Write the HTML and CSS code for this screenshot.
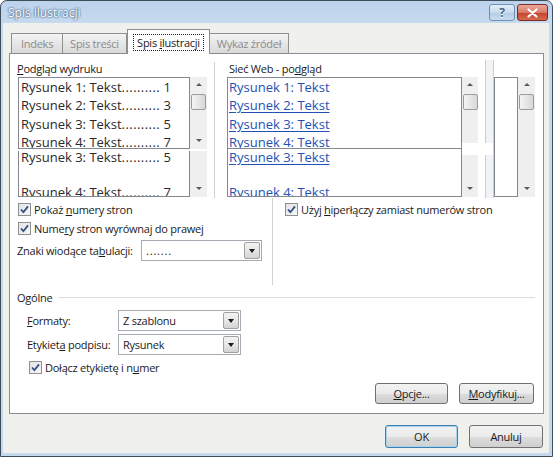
FILE: index.html
```html
<!DOCTYPE html>
<html lang="pl">
<head>
<meta charset="utf-8">
<title>Spis ilustracji</title>
<link rel="stylesheet" href="styles.css">
</head>
<body>
<div class="window">
  <div class="titlebar">
    <span class="title">Spis ilustracji</span>
    <div class="caps">
      <span class="cap help">?</span>
      <span class="cap close"><svg width="13" height="10" viewBox="0 0 13 10"><path d="M2.5 1.5 L10.5 8.5 M10.5 1.5 L2.5 8.5" stroke="#fff" stroke-width="2.2" stroke-linecap="round"/></svg></span>
    </div>
  </div>
  <div class="client">
    <div class="tabs">
      <span class="tab t1">Indeks</span>
      <span class="tab t2">Spis treści</span>
      <span class="tab t3"><span class="focus">Spis <u>i</u>lustracji</span></span>
      <span class="tab t4">Wykaz źródeł</span>
    </div>
    <div class="panel">
      <div class="top">
        <div class="pcol">
          <div class="lbl"><u>P</u>odgląd wydruku</div>
          <div class="pv pv1">
            <div class="lb lb1">
              <div class="row">Rysunek 1: Tekst<span class="dots">..........</span> 1</div>
              <div class="row">Rysunek 2: Tekst<span class="dots">..........</span> 3</div>
              <div class="row">Rysunek 3: Tekst<span class="dots">..........</span> 5</div>
              <div class="row">Rysunek 4: Tekst<span class="dots">..........</span> 7</div>
            </div>
            <div class="sb"><i class="up"></i><i class="thumb"></i><i class="dn"></i></div>
          </div>
          <div class="pv pv2">
            <div class="lb lb2">
              <div class="row r-first">Rysunek 3: Tekst<span class="dots">..........</span> 5</div>
              <div class="row r-second">Rysunek 4: Tekst<span class="dots">..........</span> 7</div>
            </div>
            <div class="sb"><i class="dn"></i></div>
          </div>
        </div>
        <div class="vsep"></div>
        <div class="wcol">
          <div class="lbl wlbl">Sieć Web - po<u>d</u>gląd</div>
          <div class="wv">
            <div class="wboxes">
              <div class="wlb wlb1">
                <div class="wrow nu">Rysunek 1: Tekst</div>
                <div class="wrow">Rysunek 2: Tekst</div>
                <div class="wrow">Rysunek 3: Tekst</div>
                <div class="wrow">Rysunek 4: Tekst</div>
              </div>
              <div class="wlb wlb2">
                <div class="wrow r-first-w">Rysunek 3: Tekst</div>
                <div class="wrow r-second">Rysunek 4: Tekst</div>
              </div>
            </div>
            <div class="wsb">
              <div class="sb sbA"><i class="up"></i><i class="thumb"></i></div>
              <div class="sbgap"></div>
              <div class="sb sbB"><i class="dn"></i></div>
            </div>
          </div>
        </div>
        <div class="strip">
          <div class="st-part st-top"></div>
          <div class="st-gap"></div>
          <div class="st-part st-bot"></div>
        </div>
        <div class="rp">
          <div class="rbox"></div>
          <div class="sb sb3"><i class="up"></i><i class="thumb"></i><i class="dn"></i></div>
        </div>
      </div>

      <div class="mid">
        <div class="mcol">
          <div class="cbrow">
            <span class="cb"><svg width="11" height="11" viewBox="0 0 11 11"><path d="M2 5.5 L4.4 8.2 L9 2.4" fill="none" stroke="#2f4f87" stroke-width="1.8"/></svg></span>
            <span>Pokaż <u>n</u>umery stron</span>
          </div>
          <div class="cbrow cbrow2">
            <span class="cb"><svg width="11" height="11" viewBox="0 0 11 11"><path d="M2 5.5 L4.4 8.2 L9 2.4" fill="none" stroke="#2f4f87" stroke-width="1.8"/></svg></span>
            <span>Nume<u>r</u>y stron wyrównaj do prawej</span>
          </div>
          <div class="comborow">
            <span>Znaki wiodące ta<u>b</u>ulacji:</span>
            <span class="combo c-tab"><span class="cval cdots">.......</span><span class="cbtn"><i class="tri"></i></span></span>
          </div>
        </div>
        <div class="msep"></div>
        <div class="mright">
          <div class="cbrow">
            <span class="cb"><svg width="11" height="11" viewBox="0 0 11 11"><path d="M2 5.5 L4.4 8.2 L9 2.4" fill="none" stroke="#2f4f87" stroke-width="1.8"/></svg></span>
            <span>Użyj <u>h</u>iperłączy zamiast numerów stron</span>
          </div>
        </div>
      </div>

      <div class="grp"><span>Ogólne</span><span class="gline"></span></div>

      <div class="frow">
        <span class="flbl"><u>F</u>ormaty:</span>
        <span class="combo c-f"><span class="cval">Z szablonu</span><span class="cbtn"><i class="tri"></i></span></span>
      </div>
      <div class="frow frow2">
        <span class="flbl">Etykiet<u>a</u> podpisu:</span>
        <span class="combo c-f"><span class="cval">Rysunek</span><span class="cbtn"><i class="tri"></i></span></span>
      </div>
      <div class="cbrow cbrow3">
        <span class="cb"><svg width="11" height="11" viewBox="0 0 11 11"><path d="M2 5.5 L4.4 8.2 L9 2.4" fill="none" stroke="#2f4f87" stroke-width="1.8"/></svg></span>
        <span>Dołącz etykietę i n<u>u</u>mer</span>
      </div>
      <div class="pbtns">
        <span class="btn b-opc"><u>O</u>pcje...</span>
        <span class="btn b-mod"><u>M</u>odyfikuj...</span>
      </div>
    </div>
    <div class="footer">
      <span class="btn b-ok">OK</span>
      <span class="btn b-cancel">Anuluj</span>
    </div>
  </div>
</div>
</body>
</html>
```

FILE: styles.css
```css
html, body {
  margin: 0;
  padding: 0;
  background: #ffffff;
}
body {
  font-family: "Open Sans", "Noto Sans", "DejaVu Sans", sans-serif;
  font-size: 11px;
  letter-spacing: -0.25px;
  color: #1a1a1a;
}
u { text-decoration: underline; text-underline-offset: 1px; }

.window {
  width: 553px;
  height: 457px;
  box-sizing: border-box;
  border: 1px solid #3f4c5a;
  border-radius: 7px 7px 0 0;
  background: linear-gradient(#bcd3ec, #c6daef 22px, #c4d8ee);
  padding: 0 3px 3px 2px;
  display: flex;
  flex-direction: column;
  overflow: hidden;
}

.titlebar {
  height: 22px;
  display: flex;
  align-items: flex-start;
  justify-content: space-between;
  padding-left: 5px;
}
.title {
  margin-top: 4px;
  font-size: 12px;
  line-height: 16px;
  letter-spacing: 0;
  color: #ffffff;
  text-shadow: 0 0 2px #4f6f92, 0 0 2px #4f6f92, 0 0 1px #4f6f92;
}
.caps {
  display: flex;
  gap: 2px;
  margin-top: 3px;
  margin-right: 1px;
}
.cap {
  height: 17px;
  box-sizing: border-box;
  border-radius: 3px;
  display: flex;
  align-items: center;
  justify-content: center;
}
.help {
  width: 26px;
  border: 1px solid #6f8fb3;
  background: linear-gradient(#e3eef9, #c7dbef 50%, #b3cce6 51%, #c8dcef);
  color: #4a6485;
  font-size: 12px;
  font-weight: bold;
  text-shadow: 0 1px 0 #fff;
}
.close {
  width: 31px;
  border: 1px solid #7e2a20;
  background: linear-gradient(#e9a89c, #d87a68 50%, #c2432e 51%, #d7694f);
}

.client {
  flex: 1;
  background: #f0f0ed;
  padding: 0 5px 0 6px;
  display: flex;
  flex-direction: column;
}

.tabs {
  display: flex;
  align-items: flex-end;
  height: 24px;
  margin-top: 6px;
  padding-left: 2px;
}
.tab {
  height: 20px;
  box-sizing: border-box;
  border: 1px solid #8e8f8f;
  border-bottom: none;
  background: linear-gradient(#f4f4f4, #e6e6e6 50%, #dadada);
  color: #8c8c8c;
  display: flex;
  align-items: center;
  justify-content: center;
  margin-left: -1px;
}
.t1 { width: 52px; margin-left: 0; }
.t2 { width: 65px; }
.t3 {
  width: 83px;
  height: 25px;
  margin-left: 0;
  margin-bottom: -1px;
  background: #ffffff;
  color: #1a1a1a;
  position: relative;
  z-index: 1;
}
.t4 { width: 80px; }
.focus {
  border: 1px dotted #222;
  padding: 0 3px;
  line-height: 15px;
}

.panel {
  height: 361px;
  box-sizing: border-box;
  border: 1px solid #898c95;
  background: #ffffff;
  padding: 6px 6px 0 7px;
  display: flex;
  flex-direction: column;
}

.top {
  display: flex;
  height: 138px;
}
.pcol {
  width: 190px;
  display: flex;
  flex-direction: column;
}
.lbl {
  height: 17px;
  line-height: 17px;
}
.pv { display: flex; }
.pv1 { height: 72px; }
.pv2 { height: 46px; margin-top: 2px; }
.lb {
  width: 172px;
  margin-left: 1px;
  box-sizing: border-box;
  border: 1px solid #828790;
  overflow: hidden;
  padding-left: 2px;
  font-size: 13px;
  letter-spacing: 0;
  color: #2a2a2a;
}
.dots { letter-spacing: 0.45px; }
.lb2 { border-top: none; }
.row, .wrow {
  line-height: 18.3px;
  white-space: nowrap;
}
.r-first { margin-top: -3px; }
.r-first-w { margin-top: -1px; }
.r-second { margin-top: 17px; }

.sb {
  width: 17px;
  box-sizing: border-box;
  background: #efefef;
  display: flex;
  flex-direction: column;
  align-items: center;
}
.up {
  margin-top: 6px;
  width: 0; height: 0;
  border-left: 3px solid transparent;
  border-right: 3px solid transparent;
  border-bottom: 3px solid #5a5a5a;
}
.dn {
  margin-top: auto;
  margin-bottom: 7px;
  width: 0; height: 0;
  border-left: 3px solid transparent;
  border-right: 3px solid transparent;
  border-top: 3px solid #5a5a5a;
}
.thumb {
  margin-top: 8px;
  width: 15px;
  height: 16px;
  box-sizing: border-box;
  border: 1px solid #9b9b9b;
  border-radius: 2px;
  background: linear-gradient(90deg, #f4f4f4, #e6e6e6 50%, #d8d8d8);
}

.vsep {
  margin-left: 7px;
  width: 1px;
  background: #d2d2d2;
  margin-top: 2px;
}
.wcol {
  margin-left: 12px;
  width: 251px;
  display: flex;
  flex-direction: column;
}
.wlbl { padding-left: 2px; }
.wv { display: flex; }
.wboxes {
  width: 235px;
  display: flex;
  flex-direction: column;
}
.wlb {
  box-sizing: border-box;
  border: 1px solid #828790;
  overflow: hidden;
  padding-left: 1px;
  font-size: 13px;
  letter-spacing: 0;
  color: #2350b5;
}
.wlb1 { height: 72px; }
.wlb2 { height: 48px; border-top: none; }
.wrow { text-decoration: underline; text-underline-offset: 2px; }
.wrow.nu { text-decoration: none; }
.wsb {
  width: 16px;
  display: flex;
  flex-direction: column;
}
.wsb .sb { width: 16px; }
.sbA { height: 66px; }
.sbgap { height: 12px; background: #ffffff; }
.sbB { flex: 1; height: 42px; }

.strip {
  margin-left: 7px;
  width: 9px;
  box-sizing: border-box;
  border-right: 1px solid #b9d3e8;
  display: flex;
  flex-direction: column;
}
.st-part {
  border-left: 1px solid #cdcdcd;
  background: #f2f3f4;
}
.st-top { height: 83px; }
.st-gap { height: 12px; background: #ffffff; }
.st-bot { flex: 1; }

.rp {
  display: flex;
  margin-top: 17px;
  height: 120px;
}
.rbox {
  width: 24px;
  box-sizing: border-box;
  border: 1px solid #828790;
  background: #fff;
}
.sb3 { width: 17px; }

.mid {
  display: flex;
  height: 87px;
}
.mcol {
  width: 245px;
  padding-top: 4px;
}
.cbrow {
  display: flex;
  align-items: center;
  height: 15px;
  gap: 3px;
}
.cbrow2 { margin-top: 4px; }
.cb {
  margin-left: 1px;
  width: 13px;
  height: 13px;
  box-sizing: border-box;
  border: 1px solid #8e8f8f;
  background: linear-gradient(135deg, #e4e4e4, #f6f6f6);
  display: flex;
  align-items: center;
  justify-content: center;
}
.comborow {
  margin-top: 4px;
  height: 21px;
  display: flex;
  align-items: center;
  justify-content: space-between;
}
.combo {
  height: 21px;
  box-sizing: border-box;
  border: 1px solid #a6abb3;
  background: #ffffff;
  display: flex;
  align-items: center;
  padding: 1px;
}
.c-tab { width: 121px; }
.cval {
  flex: 1;
  padding-left: 3px;
  white-space: nowrap;
}
.cdots { letter-spacing: 0.8px; }
.cbtn {
  width: 16px;
  height: 17px;
  box-sizing: border-box;
  border: 1px solid #a0a0a0;
  border-radius: 2px;
  background: linear-gradient(#f3f3f3, #e6e6e6 50%, #d4d4d4);
  display: flex;
  align-items: center;
  justify-content: center;
}
.tri {
  width: 0; height: 0;
  border-left: 3.5px solid transparent;
  border-right: 3.5px solid transparent;
  border-top: 4px solid #1a1a1a;
}
.msep {
  margin-left: 10px;
  width: 1px;
  background: #d2d2d2;
}
.mright {
  margin-left: 11px;
  padding-top: 4px;
}

.grp {
  margin-top: 5px;
  height: 14px;
  display: flex;
  align-items: center;
}
.gline {
  flex: 1;
  height: 1px;
  background: #dcdcdc;
  margin-left: 6px;
  margin-right: 2px;
}
.frow {
  margin-top: 6px;
  height: 21px;
  display: flex;
  align-items: center;
  padding-left: 10px;
}
.frow2 { margin-top: 3px; }
.flbl { width: 91px; }
.c-f { width: 123px; }
.cbrow3 {
  margin-top: 5px;
  padding-left: 11px;
}

.pbtns {
  margin-top: 8px;
  display: flex;
  justify-content: flex-end;
  gap: 11px;
  padding-right: 3px;
}
.btn {
  height: 21px;
  box-sizing: border-box;
  border: 1px solid #707070;
  border-radius: 3px;
  background: linear-gradient(#f2f2f2, #ebebeb 50%, #dddddd 51%, #cfcfcf);
  display: flex;
  align-items: center;
  justify-content: center;
  color: #1a1a1a;
}
.b-opc { width: 73px; }
.b-mod { width: 75px; }

.footer {
  margin-top: 11px;
  display: flex;
  justify-content: flex-end;
  gap: 11px;
  padding-right: 1px;
}
.b-ok {
  width: 73px;
  height: 23px;
  border-color: #3c7fb1;
  box-shadow: inset 0 0 0 1px #a6d4f2;
}
.b-cancel {
  width: 74px;
  height: 23px;
}
```
